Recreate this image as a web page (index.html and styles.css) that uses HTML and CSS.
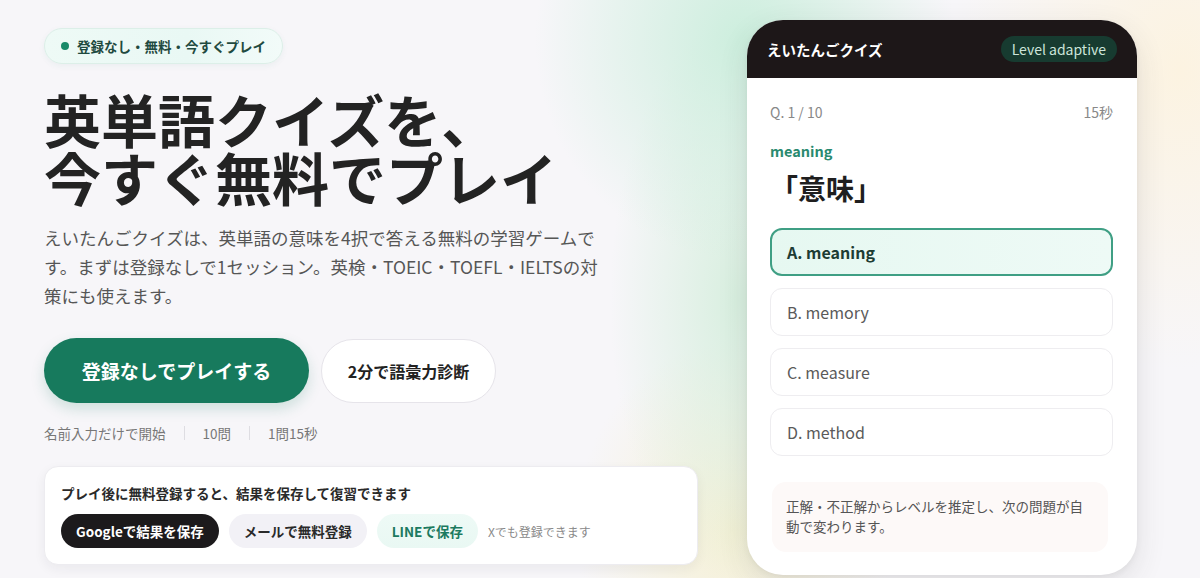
FILE: index.html
```html
<!DOCTYPE html>
<html lang="ja">
<head>
<meta charset="utf-8">
<title>えいたんごクイズ</title>
<link rel="stylesheet" href="styles.css">
</head>
<body>
<main class="hero">
  <section class="left">
    <div class="badge"><span class="dot"></span>登録なし・無料・今すぐプレイ</div>
    <h1 class="title"><span class="title-line">英単語クイズを、</span><span class="title-line">今すぐ無料でプレイ</span></h1>
    <p class="lead">えいたんごクイズは、英単語の意味を4択で答える無料の学習ゲームです。まずは登録なしで1セッション。英検・TOEIC・TOEFL・IELTSの対策にも使えます。</p>
    <div class="actions">
      <a class="btn-primary">登録なしでプレイする</a>
      <a class="btn-secondary">2分で語彙力診断</a>
    </div>
    <ul class="meta">
      <li>名前入力だけで開始</li>
      <li>10問</li>
      <li>1問15秒</li>
    </ul>
    <div class="save-card">
      <p class="save-title">プレイ後に無料登録すると、結果を保存して復習できます</p>
      <div class="save-row">
        <a class="chip chip-google">Googleで結果を保存</a>
        <a class="chip chip-mail">メールで無料登録</a>
        <a class="chip chip-line">LINEで保存</a>
        <span class="save-note">Xでも登録できます</span>
      </div>
    </div>
  </section>
  <section class="visual">
    <div class="phone">
      <header class="phone-head">
        <span class="phone-title">えいたんごクイズ</span>
        <span class="level">Level adaptive</span>
      </header>
      <div class="phone-body">
        <div class="q-row"><span>Q. 1 / 10</span><span>15秒</span></div>
        <div class="word">meaning</div>
        <div class="prompt">「意味」</div>
        <ul class="options">
          <li class="opt opt-active">A. meaning</li>
          <li class="opt">B. memory</li>
          <li class="opt">C. measure</li>
          <li class="opt">D. method</li>
        </ul>
        <div class="info">正解・不正解からレベルを推定し、次の問題が自動で変わります。</div>
      </div>
    </div>
  </section>
</main>
</body>
</html>
```

FILE: styles.css
```css
* { box-sizing: border-box; }
html, body { margin: 0; padding: 0; }
body {
  width: 1200px;
  height: 578px;
  overflow: hidden;
  background: #f7f6f9;
  font-family: "Noto Sans CJK JP", "Noto Sans", sans-serif;
  color: #222;
}
ul { list-style: none; margin: 0; padding: 0; }
p, h1 { margin: 0; }

.hero {
  display: flex;
  height: 578px;
  background:
    radial-gradient(ellipse 210px 220px at 745px 40px, rgba(204, 238, 221, 1), rgba(204, 238, 221, 0) 100%),
    radial-gradient(ellipse 130px 280px at 740px 300px, rgba(212, 238, 220, 0.9), rgba(212, 238, 220, 0) 100%),
    radial-gradient(ellipse 160px 190px at 735px 530px, rgba(245, 240, 212, 1), rgba(245, 240, 212, 0) 100%),
    radial-gradient(ellipse 230px 300px at 1180px 70px, rgba(252, 243, 225, 1), rgba(252, 243, 225, 0) 100%),
    #f7f6f9;
}

.left {
  width: 700px;
  padding: 28px 0 0 44px;
  display: flex;
  flex-direction: column;
  align-items: flex-start;
}

.badge {
  display: flex;
  align-items: center;
  gap: 8px;
  height: 36px;
  padding: 0 16px;
  border-radius: 18px;
  background: linear-gradient(90deg, #eefaf6, #e9f8f4 60%, #f2fbf9);
  border: 1px solid #dcefe8;
  box-shadow: 0 2px 6px rgba(40, 120, 100, 0.06);
  font-size: 13.5px;
  font-weight: 700;
  color: #1f4a40;
}
.dot {
  width: 8px;
  height: 8px;
  border-radius: 50%;
  background: #1a8a69;
}

.title {
  margin-top: 25px;
  font-size: 57px;
  line-height: 58px;
  font-weight: 700;
  color: #232323;
}
.title-line { display: block; }

.lead {
  margin-top: 18px;
  width: 560px;
  font-size: 17.5px;
  line-height: 29px;
  color: #565656;
}

.actions {
  margin-top: 28px;
  display: flex;
  align-items: center;
  gap: 12px;
}
.btn-primary {
  display: flex;
  align-items: center;
  justify-content: center;
  height: 65px;
  width: 265px;
  border-radius: 33px;
  background: #177a5d;
  color: #fff;
  font-size: 19px;
  font-weight: 700;
  box-shadow: 0 6px 14px rgba(23, 122, 93, 0.18);
}
.btn-secondary {
  display: flex;
  align-items: center;
  justify-content: center;
  height: 64px;
  width: 175px;
  border-radius: 32px;
  background: #fff;
  border: 1px solid #e6e4ea;
  color: #222;
  font-size: 16px;
  font-weight: 700;
}

.meta {
  margin-top: 20px;
  display: flex;
  align-items: center;
  font-size: 13.5px;
  line-height: 20px;
  color: #777;
}
.meta li + li {
  margin-left: 18px;
  padding-left: 18px;
  border-left: 1px solid #dedde2;
  line-height: 14px;
}

.save-card {
  margin-top: 23px;
  width: 654px;
  padding: 16px;
  background: #fff;
  border: 1px solid #edecf0;
  border-radius: 14px;
  box-shadow: 0 4px 12px rgba(30, 30, 50, 0.06);
}
.save-title {
  font-size: 13.5px;
  line-height: 20px;
  font-weight: 700;
  color: #2a2a2a;
}
.save-row {
  margin-top: 11px;
  display: flex;
  align-items: center;
  gap: 10px;
}
.chip {
  display: flex;
  align-items: center;
  height: 34px;
  padding: 0 15px;
  border-radius: 17px;
  font-size: 13.5px;
  font-weight: 700;
}
.chip-google { background: #1c1a1c; color: #fff; }
.chip-mail { background: #f2f1f6; color: #2a2a2a; }
.chip-line {
  background: linear-gradient(180deg, #eefaf6, #e9f8f3);
  color: #1c7a60;
}
.save-note { font-size: 12px; color: #888; }

/* right visual */
.visual {
  flex: 1;
  padding: 20px 0 0 47px;
}

.phone {
  width: 390px;
  height: 555px;
  border-radius: 36px;
  background: #fff;
  overflow: hidden;
  box-shadow: 0 10px 30px rgba(60, 60, 60, 0.12), 0 2px 6px rgba(0, 0, 0, 0.05);
  display: flex;
  flex-direction: column;
}
.phone-head {
  height: 58px;
  flex: none;
  background: #1d1718;
  display: flex;
  align-items: center;
  justify-content: space-between;
  padding: 0 20px;
}
.phone-title {
  color: #fff;
  font-size: 14.5px;
  font-weight: 700;
}
.level {
  height: 26px;
  display: flex;
  align-items: center;
  padding: 0 11px;
  border-radius: 13px;
  background: #173b30;
  color: #cde5da;
  font-size: 14px;
}

.phone-body {
  padding: 24px 24px 0 23px;
}
.q-row {
  display: flex;
  justify-content: space-between;
  font-size: 14px;
  line-height: 20px;
  color: #888;
}
.word {
  margin-top: 19px;
  font-size: 14.5px;
  line-height: 20px;
  font-weight: 700;
  color: #2a8a6f;
}
.prompt {
  margin-top: 9px;
  font-size: 28px;
  line-height: 36px;
  font-weight: 700;
  color: #1f1f1f;
}
.options {
  margin-top: 22px;
  display: flex;
  flex-direction: column;
  gap: 12px;
}
.opt {
  height: 48px;
  display: flex;
  align-items: center;
  padding: 0 16px;
  border: 1px solid #eeedf0;
  border-radius: 12px;
  font-size: 16px;
  color: #5a5a5a;
  background: #fff;
}
.opt-active {
  border: 2px solid #3f9f84;
  padding-left: 15px;
  background: linear-gradient(90deg, #e6f8f1, #eefaf6);
  color: #1d3c34;
  font-weight: 700;
}
.info {
  margin: 26px 5px 0 2px;
  padding: 15px 14px 16px;
  border-radius: 14px;
  background: #fdf9f8;
  font-size: 13.5px;
  line-height: 19.5px;
  color: #555;
}
```
